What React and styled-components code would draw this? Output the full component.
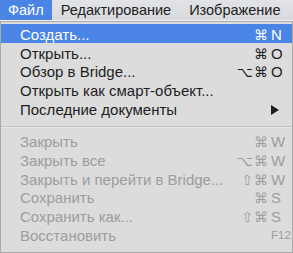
import React from "react";
import styled, { createGlobalStyle } from "styled-components";

const Global = createGlobalStyle`
  html, body { margin: 0; padding: 0; background: #dcdcdc; }
  body { font-family: "Liberation Sans", "DejaVu Sans", Arial, sans-serif; }
`;

const Screen = styled.div`
  width: 293px;
  height: 253px;
  display: flex;
  flex-direction: column;
  overflow: hidden;
  background: #dcdcdc;
`;

const MenuBar = styled.div`
  height: 20px;
  display: flex;
  align-items: stretch;
  background: linear-gradient(#e2e3e6, #d8dadd);
  border-bottom: 1px solid #eef0f2;
`;

const MenuTitle = styled.div`
  display: flex;
  align-items: center;
  padding: 0 ${(p) => (p.$first ? "8px" : "9px")};
  font-size: 14.5px;
  line-height: 20px;
  color: ${(p) => (p.$active ? "#ffffff" : "#222222")};
  background: ${(p) => (p.$active ? "#4a84e4" : "transparent")};
`;

const Dropdown = styled.div`
  flex: 1;
  display: flex;
  flex-direction: column;
  background: #dcdcdc;
  border: 1px solid #a9a9a9;
  padding: 2px 0 7px;
`;

const Row = styled.div`
  display: flex;
  align-items: flex-start;
  height: 18.7px;
  box-sizing: border-box;
  padding: 3px 4px 0 19px;
  font-size: 15px;
  line-height: 15.7px;
  white-space: nowrap;
  color: ${(p) => (p.$active ? "#ffffff" : p.$disabled ? "#9d9d9d" : "#1e1e1e")};
  background: ${(p) => (p.$active ? "#4a84e4" : "transparent")};
`;

const Label = styled.span`
  flex: 1;
`;

const Shortcut = styled.span`
  display: grid;
  grid-template-columns: auto 17px;
  column-gap: 2px;
  align-items: baseline;
`;

const Mods = styled.span`
  text-align: right;
  font-family: "DejaVu Sans", sans-serif;
  font-size: 14px;
  letter-spacing: 1px;
`;

const Key = styled.span`
  text-align: ${(p) => (p.$right ? "right" : "left")};
  font-size: ${(p) => (p.$small ? "11.5px" : "15px")};
  margin-right: ${(p) => (p.$right ? "-1px" : "0")};
`;

const Arrow = styled.svg`
  display: block;
  margin-top: 3px;
`;

const Separator = styled.div`
  height: 13.8px;
  box-sizing: border-box;
  padding-top: 9px;
  &::after {
    content: "";
    display: block;
    height: 1px;
    background: #c4c4c4;
    border-bottom: 1px solid #e6e6e6;
  }
`;

const items = [
  { label: "Создать...", mods: "⌘", key: "N", active: true },
  { label: "Открыть...", mods: "⌘", key: "O" },
  { label: "Обзор в Bridge...", mods: "⌥⌘", key: "O" },
  { label: "Открыть как смарт-объект..." },
  { label: "Последние документы", submenu: true },
  { sep: true },
  { label: "Закрыть", mods: "⌘", key: "W", disabled: true },
  { label: "Закрыть все", mods: "⌥⌘", key: "W", disabled: true },
  { label: "Закрыть и перейти в Bridge...", mods: "⇧⌘", key: "W", disabled: true },
  { label: "Сохранить", mods: "⌘", key: "S", disabled: true },
  { label: "Сохранить как...", mods: "⇧⌘", key: "S", disabled: true },
  { label: "Восстановить", fkey: "F12", disabled: true },
];

export default function App() {
  return (
    <Screen>
      <Global />
      <MenuBar>
        <MenuTitle $first $active>Файл</MenuTitle>
        <MenuTitle>Редактирование</MenuTitle>
        <MenuTitle>Изображение</MenuTitle>
      </MenuBar>
      <Dropdown>
        {items.map((it, i) =>
          it.sep ? (
            <Separator key={i} />
          ) : (
            <Row key={i} $active={it.active} $disabled={it.disabled}>
              <Label>{it.label}</Label>
              {it.key && (
                <Shortcut>
                  <Mods>{it.mods}</Mods>
                  <Key>{it.key}</Key>
                </Shortcut>
              )}
              {it.fkey && (
                <Shortcut>
                  <Mods />
                  <Key $right $small>{it.fkey}</Key>
                </Shortcut>
              )}
              {it.submenu && (
                <Shortcut>
                  <Mods />
                  <Arrow width="8" height="10" viewBox="0 0 8 10">
                    <path d="M0 0 L8 5 L0 10 Z" fill="#1e1e1e" />
                  </Arrow>
                </Shortcut>
              )}
            </Row>
          )
        )}
      </Dropdown>
    </Screen>
  );
}
